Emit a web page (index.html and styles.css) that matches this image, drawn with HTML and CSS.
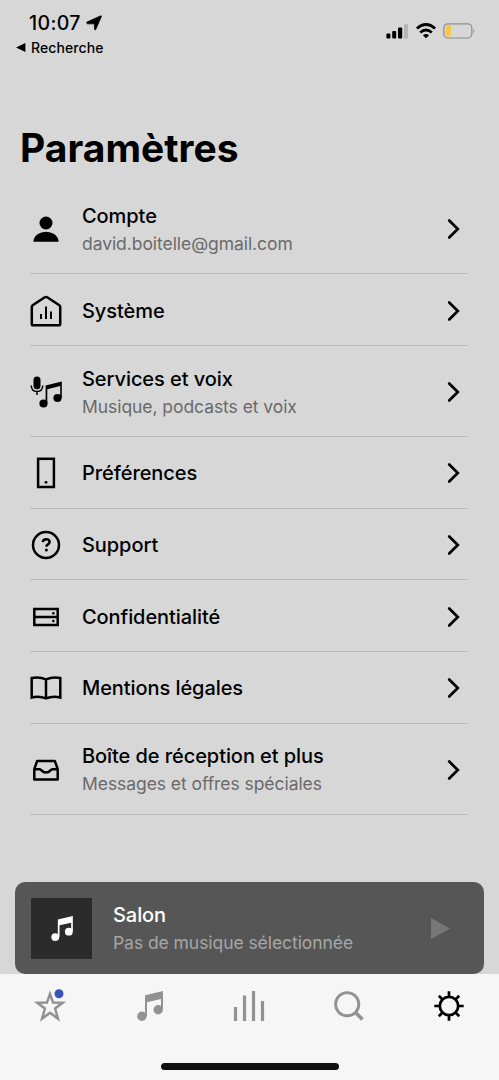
FILE: index.html
```html
<!DOCTYPE html>
<html lang="fr">
<head>
<meta charset="utf-8">
<title>Paramètres</title>
<link rel="stylesheet" href="styles.css">
</head>
<body>
<svg class="defs" width="0" height="0" aria-hidden="true">
  <symbol id="chevron" viewBox="0 0 14 22"><path d="M2.2 2.500 10.800 11 2.2 19.500" fill="none" stroke="currentColor" stroke-width="2.7" stroke-linecap="round"/></symbol>
  <symbol id="notes" viewBox="0 0 26 30"><path d="M8 4.2 26 0v18.5h-2V8L10 11.2v14H8z"/><circle cx="4.9" cy="25.3" r="4.7"/><circle cx="21.2" cy="18.8" r="4.7"/></symbol>
</svg>
<div class="screen">
  <header class="status">
    <div class="status-left">
      <div class="clock">10:07
        <svg class="arrow" width="16" height="16" viewBox="0 0 17 16"><path d="M1 7 15.300.5Q16.800 0 16.200 1.500L10.300 15q-.9 1.200-1.200-.3L8.800 8.900H1.600Q0 8.200 1 7z" stroke="#000" stroke-width=".8"/></svg>
      </div>
      <div class="back"><svg width="10" height="9" viewBox="0 0 10 9"><path d="M0 4.5 9.4 0v9z"/></svg><span>Recherche</span></div>
    </div>
    <div class="status-right">
      <svg width="23" height="16" viewBox="0 0 23 16"><rect x=".4" y="10.5" width="4" height="5" rx="1"/><rect x="6.2" y="8" width="4" height="7.5" rx="1"/><rect x="12" y="4.5" width="4.2" height="11" rx="1"/><rect x="18" y="1" width="4" height="14.5" rx="1" fill="#b5b5b5"/></svg>
      <svg class="outline" width="20" height="16" viewBox="0 0 20 16" stroke-width="2.9"><path d="M.9 5.500Q10-2.300 19.100 5.500"/><path d="M4.200 9.500q5.800-4.800 11.600 0"/><path d="M6.900 12.200q3.100-2.300 6.200 0L10 15.200z" fill="#000" stroke="none"/></svg>
      <svg width="33" height="16" viewBox="0 0 33 16"><rect x=".8" y=".8" width="28" height="14.2" rx="4" fill="none" stroke="#8e8e8e" stroke-width="1.2"/><path d="M5 2.500h3v11H5q-2.500 0-2.500-2.500V5Q2.500 2.500 5 2.500z" fill="#f3c846"/><path d="M30.400 5.400q2 2.500 0 5z" fill="#8e8e8e"/></svg>
    </div>
  </header>

  <h1 class="title">Paramètres</h1>

  <main class="list">
    <div class="row tall">
      <svg class="icon" viewBox="0 0 32 32"><circle cx="16" cy="10" r="6.500"/><path d="M3.300 28.800q.5-4.700 4.200-7.500Q11 18.700 16 18.700t8.500 2.600Q28.200 24.100 28.700 28.800z"/></svg>
      <div class="label"><div class="name">Compte</div><div class="sub">david.boitelle@gmail.com</div></div>
      <svg class="chev"><use href="#chevron"/></svg>
    </div>
    <div class="row">
      <svg class="icon line" viewBox="0 0 32 32"><path d="M14.800 2.300 2.700 10.300Q1.800 11 1.800 12v17q0 1.300 1.300 1.300h25.800q1.300 0 1.300-1.300V12q0-1-.9-1.700L17.200 2.300q-1.200-.8-2.400 0z"/><path d="M11 19v5M16 11.500V24M21 16.500V24" stroke-width="2"/></svg>
      <div class="label"><div class="name">Système</div></div>
      <svg class="chev"><use href="#chevron"/></svg>
    </div>
    <div class="row tall">
      <svg class="icon" viewBox="0 0 32 32"><rect x="3.500" y=".5" width="7" height="12.700" rx="3.500"/><path d="M1.200 9.500q.3 6 5.800 6t5.800-6M7 15.500v3.500" fill="none" stroke="#000" stroke-width="1.500"/><path d="M15.600 9.500 31.800 5.500V22h-1.600V10L17.300 13.300V27h-1.700z"/><circle cx="13.500" cy="27.500" r="4.100"/><circle cx="27.500" cy="22" r="4.100"/></svg>
      <div class="label"><div class="name">Services et voix</div><div class="sub">Musique, podcasts et voix</div></div>
      <svg class="chev"><use href="#chevron"/></svg>
    </div>
    <div class="row">
      <svg class="icon line" viewBox="0 0 32 32"><rect x="8.100" y="1.800" width="15.800" height="28.200"/><circle cx="16" cy="25.300" r="1.400" fill="#000" stroke="none"/></svg>
      <div class="label"><div class="name">Préférences</div></div>
      <svg class="chev"><use href="#chevron"/></svg>
    </div>
    <div class="row">
      <svg class="icon line" viewBox="0 0 32 32"><circle cx="16" cy="16" r="13"/><path d="M12.800 13.200q.2-2.900 3.400-2.900t3.400 2.600q0 1.500-1.700 2.500-1.500.9-1.500 2.400"/><circle cx="16.400" cy="20.900" r="1.500" fill="#000" stroke="none"/></svg>
      <div class="label"><div class="name">Support</div></div>
      <svg class="chev"><use href="#chevron"/></svg>
    </div>
    <div class="row">
      <svg class="icon line" viewBox="0 0 32 32"><path d="M4.300 8.100h23.400v15.800H4.300zM4.300 16h23.400"/><circle cx="23.300" cy="12.200" r="1.300" fill="#000" stroke="none"/><circle cx="23.300" cy="20" r="1.300" fill="#000" stroke="none"/></svg>
      <div class="label"><div class="name">Confidentialité</div></div>
      <svg class="chev"><use href="#chevron"/></svg>
    </div>
    <div class="row">
      <svg class="icon line" viewBox="0 0 32 32"><path d="M16 7.300Q9 4.300 1.700 6v19.500Q9 23.500 16 26.300q7-2.800 14.300-.8V6Q23 4.300 16 7.300zV26"/></svg>
      <div class="label"><div class="name">Mentions légales</div></div>
      <svg class="chev"><use href="#chevron"/></svg>
    </div>
    <div class="row tall">
      <svg class="icon line" viewBox="0 0 32 32"><path d="M4.300 15.200V25.500h23.400V15.200L24.900 7.100H7.100zM4.300 15.200h5.500c1.800 0 1.900 3.300 6.200 3.300s4.400-3.300 6.200-3.300h5.500" stroke-linejoin="round"/></svg>
      <div class="label"><div class="name">Boîte de réception et plus</div><div class="sub">Messages et offres spéciales</div></div>
      <svg class="chev"><use href="#chevron"/></svg>
    </div>
  </main>

  <section class="player">
    <div class="cover"><svg width="22" height="25"><use href="#notes"/></svg></div>
    <div class="label"><div class="name">Salon</div><div class="sub">Pas de musique sélectionnée</div></div>
    <svg class="play" width="19" height="21" viewBox="0 0 19 21"><path d="M0 0 19 10.500 0 21z"/></svg>
  </section>

  <nav class="tabs">
    <div class="tabrow">
      <div class="tab"><svg width="32" height="32" viewBox="0 0 32 32"><path class="star" d="M16 4 19.100 12.600 28.600 12.800 21.100 18.500 23.900 28.600 16 22.800 8.100 28.600 10.900 18.500 3.400 12.800 12.900 12.600z"/><circle class="badge" cx="25" cy="3.800" r="4.500"/></svg></div>
      <div class="tab"><svg width="26" height="30"><use href="#notes"/></svg></div>
      <div class="tab"><svg class="outline" width="32" height="30" viewBox="0 0 32 30" stroke-width="3.2"><path d="M2.500 16v14M11.500 4.500V30M20.500 0v30M29.500 10v20"/></svg></div>
      <div class="tab"><svg class="outline" width="30" height="30" viewBox="0 0 30 30" stroke-width="2.900"><circle cx="13.200" cy="13.200" r="11.600"/><path d="M21.300 21.300 28.500 28.500" stroke-width="3.600"/></svg></div>
      <div class="tab active"><svg class="outline" width="30" height="30" viewBox="0 0 30 30" stroke-width="2.700"><circle cx="15" cy="15" r="9.200"/><path d="M15 .3v5.500M15 24.200v5.500M.3 15h5.500M24.200 15h5.500M4.800 4.800l3.700 3.700M21.500 21.500l3.700 3.700M4.800 25.200l3.700-3.700M21.500 8.500l3.700-3.700"/></svg></div>
    </div>
    <div class="home"></div>
  </nav>
</div>
</body>
</html>
```
FILE: styles.css
```css
* { box-sizing: border-box; }
body { margin: 0; background: #d7d7d7; color: #000; font-family: Inter, "Liberation Sans", sans-serif; }
.defs { display: none; }
svg { display: block; fill: currentColor; flex: none; overflow: visible; }
.outline { fill: none; stroke: currentColor; }
.screen { width: 499px; height: 1080px; display: flex; flex-direction: column; overflow: hidden; }

.status { height: 125px; padding: 12px 23px 0 16px; display: flex; justify-content: space-between; align-items: flex-start; }
.clock { display: flex; align-items: center; gap: 5px; padding-left: 13px; height: 22px; font-size: 19.5px; font-weight: 550; letter-spacing: .35px; }
.back { display: flex; align-items: center; gap: 5px; margin-top: 3px; height: 20px; font-size: 14px; font-weight: 500; letter-spacing: .1px; }
.status-right { display: flex; gap: 7px; padding-top: 11px; }

.title { margin: 0; padding-left: 20px; height: 58.4px; line-height: 45px; font-size: 39px; font-weight: 700; letter-spacing: 0; }

.list { padding: 0 31px 0 30px; }
.row { display: flex; align-items: center; height: 71.7px; padding-top: 2px; border-bottom: 1px solid #bcbcbc; }
.row.tall { height: 91px; }
.icon { width: 32px; height: 32px; }
.line { fill: none; stroke: #000; stroke-width: 2.5; }
.label { flex: 1; padding: 1px 0 0 20px; white-space: nowrap; }
.name { font-size: 20px; font-weight: 500; line-height: 27px; letter-spacing: -.07px; }
.sub { font-size: 17.5px; line-height: 27px; letter-spacing: -.06px; color: #6a6a6a; }
.chev { width: 14px; height: 22px; margin-right: 7px; }

.player { margin: 67.6px 15px 0; height: 92px; padding: 0 34px 0 16px; display: flex; align-items: center; background: #565656; color: #fff; border-radius: 10px; }
.player .label { padding: 2px 0 0 21px; }
.player .sub { color: #a6a6a6; }
.cover { width: 61px; height: 61px; display: grid; place-items: center; background: #2b2b2b; }
.play { color: #777; }

.tabs { flex: 1; background: #f6f6f6; display: flex; flex-direction: column; align-items: center; }
.tabrow { width: 100%; height: 89px; padding-top: 16px; display: flex; }
.tab { flex: 1; height: 32px; display: flex; justify-content: center; align-items: center; color: #929292; }
.tab.active { color: #000; }
.star { fill: none; stroke: currentColor; stroke-width: 2.5; }
.badge { fill: #3556b8; }
.home { width: 178px; height: 7px; border-radius: 4px; background: #111; }
```
